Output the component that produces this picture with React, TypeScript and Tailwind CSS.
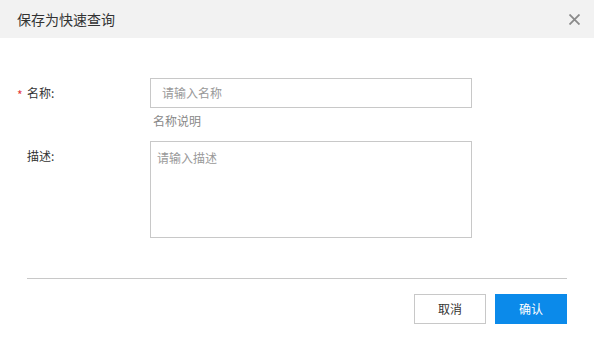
import React from "react";

export default function App() {
  const font = { fontFamily: '"Noto Sans CJK SC", "Noto Sans", sans-serif' };
  return (
    <div className="w-[594px] h-[338px] bg-white flex flex-col text-[#333]" style={font}>
      <div className="h-[38px] bg-[#f2f2f2] flex items-center justify-between pl-[17px] pr-[14px]">
        <span className="text-[14px] leading-[20px] text-[#333]">保存为快速查询</span>
        <svg width="11" height="11" viewBox="0 0 11 11">
          <path d="M0.5 0.5 L10.5 10.5 M10.5 0.5 L0.5 10.5" stroke="#8a8a8a" strokeWidth="1.8" />
        </svg>
      </div>
      <div className="flex flex-col pt-[40px] text-[12px]">
        <div className="flex">
          <div className="w-[150px] shrink-0 pl-[17px] flex items-center h-[30px]">
            <span className="text-[#e4393c] w-[10px] leading-[18px] pt-[3px]">*</span>
            <span className="leading-[18px]">名称:</span>
          </div>
          <div className="flex flex-col">
            <div className="w-[322px] h-[30px] border border-[#c8c8c8] flex items-center pl-[11px] text-[#999] leading-[18px]">
              请输入名称
            </div>
            <div className="pl-[3px] pt-[4px] text-[#888] leading-[18px]">名称说明</div>
          </div>
        </div>
        <div className="flex mt-[11px]">
          <div className="w-[150px] shrink-0 pl-[27px] pt-[6px] leading-[18px]">描述:</div>
          <div className="w-[322px] h-[97px] border border-[#c8c8c8] pl-[6px] pt-[7px] text-[#999] leading-[18px]">
            请输入描述
          </div>
        </div>
        <div className="mx-[27px] mt-[40px] h-px bg-[#c8c8c8]" />
        <div className="flex justify-end gap-[9px] pr-[27px] mt-[15px]">
          <div className="w-[72px] h-[30px] border border-[#c8c8c8] flex items-center justify-center text-[#333] leading-[18px]">
            取消
          </div>
          <div className="w-[72px] h-[30px] bg-[#0b8aea] flex items-center justify-center text-white leading-[18px]">
            确认
          </div>
        </div>
      </div>
    </div>
  );
}
